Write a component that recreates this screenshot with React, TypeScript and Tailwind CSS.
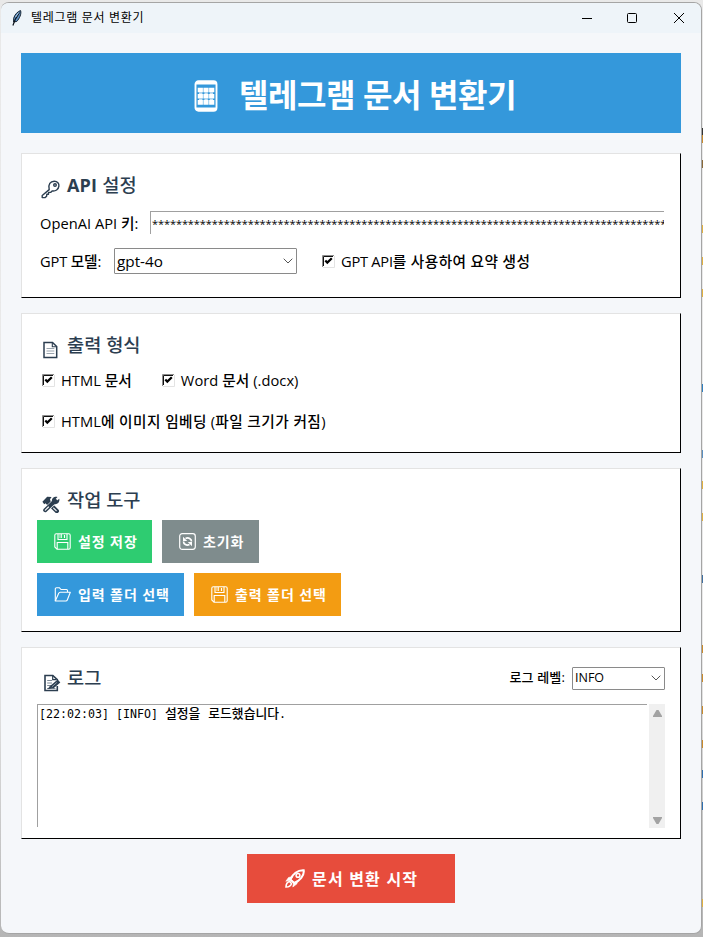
import React, { FunctionComponent, ReactNode } from "react";

interface ChildrenProps {
	children?: ReactNode;
}

interface CardProps extends ChildrenProps {
	twHeight: string;
}

interface CardTitleProps extends ChildrenProps {
	icon: ReactNode;
}

interface CheckProps extends ChildrenProps {
	twText?: string;
}

interface ComboBoxProps {
	value: string;
	twBox: string;
	twText: string;
}

interface ToolButtonProps {
	icon: ReactNode;
	text: string;
	twBox: string;
}

const API_KEY_MASK = "*".repeat(86);

// slivers of the desktop that show beside the window
const desktopMarks = [
	"top-[128px] bg-[#333333]",
	"top-[135px] bg-[#c98a2b]",
	"top-[160px] bg-[#8a6a3a]",
	"top-[225px] bg-[#e0b040]",
	"top-[257px] bg-[#e0b040]",
	"top-[289px] bg-[#e0b040]",
	"top-[384px] bg-[#2f7fc0]",
	"top-[450px] bg-[#5b8fc0]",
	"top-[481px] bg-[#e0b040]",
	"top-[513px] bg-[#e0b040]",
	"top-[575px] bg-[#3f6fa0]",
	"top-[645px] bg-[#c98a2b]",
	"top-[674px] bg-[#c98a2b]",
	"top-[706px] bg-[#c98a2b]",
	"top-[740px] bg-[#c98a2b]",
	"top-[770px] bg-[#2f6fb0]",
	"top-[802px] bg-[#2f6fb0]",
	"top-[899px] bg-[#e0b040]"
];

const FeatherIcon: FunctionComponent = function() {
	return (
		<svg className="w-[10px] h-4" viewBox="0 0 10 16">
			<path d="M8.6.6C6 1.2 2.6 4.600 1.700 8.200L1.600 12 4.800 11.400C7.500 8.500 9.600 4 8.600.6Z" fill="#5b8fc4" stroke="#14202e" strokeWidth="1" />
			<path d="M7.500 2.500 3.200 9.500.9 15.500" fill="none" stroke="#0b1118" strokeWidth="1.200" />
			<path d="M6.800 2.500 3.600 7" fill="none" stroke="#b9d6f0" strokeWidth=".9" />
		</svg>
	);
};

const PhoneIcon: FunctionComponent = function() {
	return (
		<svg className="w-6 h-8" viewBox="0 0 24 32" fill="none">
			<rect x="1.500" y="1.250" width="21" height="29.500" rx="3" stroke="white" strokeWidth="1.900" />
			<path d="M2 3H22M2 29H22" stroke="white" strokeWidth="3" />
			<path d="M3.700 10H20.300M3.700 16.200H20.300M3.700 22.400H20.300" stroke="white" strokeWidth="4.600" strokeDasharray="5.200 .5" />
			<path d="M5 13.100H19M5 19.300H19" stroke="#c3dff3" strokeWidth="1.600" strokeDasharray="3.400 2" />
		</svg>
	);
};

const KeyIcon: FunctionComponent = function() {
	return (
		<svg className="w-[19px] h-[19px]" viewBox="0 0 19 19" fill="none" stroke="#2c3e50" strokeWidth="1.400" strokeLinejoin="round">
			<path d="M8.200 9.600C6.800 4.500 9.500 1.200 13.200 1.200C16.500 1.200 18.200 3.600 17.900 6.200C17.500 9.400 14.500 11.500 11.100 10.900L9.600 12.400H7.600L7.500 14.300H5.800L5.600 16.200 4.200 17.600H1.200V15.500Z" />
			<circle cx="14" cy="5" r="1.300" />
		</svg>
	);
};

const PageIcon: FunctionComponent = function() {
	return (
		<svg className="w-[15px] h-[18px]" viewBox="0 0 15 18" fill="none" stroke="#2c3e50">
			<path d="M1 1.500H9.500L13.700 5.500V16.500H1Z" strokeWidth="1.500" />
			<path d="M9.300 1.500V5.700H13.700" strokeWidth="1.100" />
			<path d="M3.500 7.500H11.300M3.500 10H11.300M3.500 12.500H11.300" stroke="#9aa4ae" strokeWidth="1" />
		</svg>
	);
};

const ToolsIcon: FunctionComponent = function() {
	return (
		<svg className="w-[18px] h-[17px]" viewBox="0 0 18 17" fill="none">
			<path d="M5.500 5.800 14.800 15" stroke="#2c3e50" strokeWidth="4.400" strokeLinecap="round" />
			<path d="M.4 5.700 5.200.7 9.600 1.100 8 3.300 8.900 6.200 5.300 9.200 3.700 7.300 2.200 8.200Z" fill="#2c3e50" />
			<path d="M13.200 4.800 3.400 14.200" stroke="white" strokeWidth="5.200" />
			<path d="M13.200 4.800 3.200 14.200" stroke="#2c3e50" strokeWidth="4" strokeLinecap="round" />
			<path d="M10 5.800C9.400 2.200 12.300.3 15.500 1L13.400 3.300 14.700 4.700 17.300 2.800C18 6.500 15 9 11.800 8Z" fill="#2c3e50" />
			<path d="M11.600 12.100 14.200 14.600M3.300 14.200 6.500 11" stroke="white" strokeWidth="1.100" strokeLinecap="round" />
		</svg>
	);
};

const MemoIcon: FunctionComponent = function() {
	return (
		<svg className="w-[17px] h-[18px]" viewBox="0 0 17 18" fill="none" stroke="#2c3e50">
			<path d="M13.300 12V16.500H1V1.500H8.800L13.300 5.700V6.500" strokeWidth="1.600" />
			<path d="M8.700 1.500V5.700H12" strokeWidth="1.200" />
			<path d="M3.200 6.500H8M3.200 9H8M3.200 11.500H6M3 14.500H11.500" stroke="#7c8996" />
			<path d="M15 7 8 13" strokeWidth="4" />
			<path d="M7.200 11 4.500 14.500 9 13.600Z" fill="#2c3e50" />
			<path d="M12.800 8.500 8 12.700" stroke="#a8b3bd" strokeWidth=".8" />
		</svg>
	);
};

const FloppyIcon: FunctionComponent = function() {
	return (
		<svg className="w-[17px] h-[17px]" viewBox="0 0 17 17" fill="none" stroke="white" strokeWidth="1.100">
			<path d="M.8 2.300Q.8.8 2.300.8H14.700Q16.200.8 16.200 2.300V14.700Q16.200 16.200 14.700 16.200H3L.8 14Z" />
			<path d="M4 1V6.500H13V1M10.500 2V5M3.200 16V9.500H13.800V16" />
			<path d="M6 1V5M7.500 1V5" strokeWidth=".8" />
		</svg>
	);
};

const ReloadIcon: FunctionComponent = function() {
	return (
		<svg className="w-[17px] h-[17px]" viewBox="0 0 17 17" fill="none" stroke="white" strokeWidth="1.200">
			<rect x=".7" y=".7" width="15.600" height="15.600" rx="2.500" />
			<path d="M12.500 8.500C12.500 5.800 9.500 4 6.500 5.500M4.500 8.500C4.500 11.200 7.500 13 10.500 11.500" strokeWidth="1.700" />
			<path d="M4 3.800V8H8.200ZM13 13.200V9H8.800Z" fill="white" stroke="none" />
		</svg>
	);
};

const FolderIcon: FunctionComponent = function() {
	return (
		<svg className="w-[17px] h-[15px]" viewBox="0 0 17 15" fill="none" stroke="white" strokeWidth="1.100" strokeLinejoin="round">
			<path d="M1.300 14V2Q1.300.8 2.500.8H5.500L7 2.500H12.500Q13.500 2.500 13.500 3.500V5" />
			<path d="M1.300 14 4.700 6.300Q5 5.200 6.200 5.200H16.300L13.300 13Q12.900 14 11.800 14Z" />
		</svg>
	);
};

const RocketIcon: FunctionComponent = function() {
	return (
		<svg className="w-[20px] h-[19px]" viewBox="0 0 20 19" fill="none" stroke="white">
			<path d="M5.200 10.500C7.500 5.500 12.500.8 18.700 1.200C19.600 6.500 14.500 12 9.300 14Z" strokeWidth="2" />
			<circle cx="13" cy="6.400" r="1.900" strokeWidth="1.500" />
			<path d="M8 7.500 3.500 8.500.8 12.300 5.500 11.300 8.500 14 7.800 18 12 14.800 12.500 11.500 9.500 13.500 6 10.500Z" fill="white" strokeWidth=".6" />
			<path d="M4.700 12.500C2.500 13 1 15.500 1 18C3.500 18 5.800 17 6.500 14.600Z" strokeWidth="1.600" />
		</svg>
	);
};

const Chevron: FunctionComponent = function() {
	return (
		<svg className="w-[10px] h-[6px] shrink-0" viewBox="0 0 10 6" fill="none">
			<path d="M.7.7 5 5 9.300.7" stroke="#555555" strokeWidth="1" />
		</svg>
	);
};

const Card: FunctionComponent<CardProps> = function({ twHeight, children }: CardProps) {
	return (
		<section className={`flex flex-col bg-white border border-t-[#e3e3e3] border-l-[#e3e3e3] border-r-black border-b-black px-[15px] ${twHeight}`}>
			{children}
		</section>
	);
};

const CardTitle: FunctionComponent<CardTitleProps> = function({ icon, children }: CardTitleProps) {
	return (
		<h2 className="flex items-center h-7 text-[#2c3e50] text-[18.67px] leading-7 font-medium whitespace-pre">
			<span className="flex justify-center w-[19px] ml-1 mr-[7px] pt-[9px]">{icon}</span>
			{children}
		</h2>
	);
};

const Check: FunctionComponent<CheckProps> = function({ twText = "", children }: CheckProps) {
	return (
		<label className="flex items-center h-6">
			<svg className="w-[13px] h-[13px] mr-[6px]" viewBox="0 0 13 13" fill="none">
				<path d="M.5 12V.5H12" stroke="#8c8c8c" />
				<path d="M1.500 11V1.500H11" stroke="#111111" />
				<path d="M1 12.500H12.500V1" stroke="#e3e3e3" />
				<path d="M3.300 5.500 5.300 7.600 9.800 3.200" stroke="black" strokeWidth="2.200" />
			</svg>
			<span className={`whitespace-pre ${twText}`}>{children}</span>
		</label>
	);
};

const ComboBox: FunctionComponent<ComboBoxProps> = function({ value, twBox, twText }: ComboBoxProps) {
	return (
		<div className={`flex items-center justify-between bg-white border border-[#8a8a8a] rounded-[1px] pl-[2px] pr-[3px] ${twBox}`}>
			<span className={twText}>{value}</span>
			<Chevron />
		</div>
	);
};

const ToolButton: FunctionComponent<ToolButtonProps> = function({ icon, text, twBox }: ToolButtonProps) {
	return (
		<button className={`flex items-center h-[43px] pl-[17px] gap-[7px] text-white text-[14px] font-bold whitespace-pre ${twBox}`}>
			{icon}
			<span className="pb-px tracking-[0.9px]">{text}</span>
		</button>
	);
};

const TitleBar: FunctionComponent = function() {
	return (
		<header className="flex items-center h-[30px] shrink-0 pl-[11px] bg-[#eef4f9]">
			<FeatherIcon />
			<span className="ml-[9px] text-[12px] tracking-[0.7px] whitespace-pre">텔레그램 문서 변환기</span>
			<svg className="ml-auto mr-[16px] w-[103px] h-3" viewBox="0 0 103 12" fill="none" stroke="black">
				<path d="M0 6.500H10" />
				<rect x="45.500" y="1.500" width="9" height="9" rx="1" />
				<path d="M92 1 102 11M102 1 92 11" />
			</svg>
		</header>
	);
};

const LogView: FunctionComponent = function() {
	return (
		<div className="flex mt-[12px] h-[124px] gap-[2px]">
			<div className="w-[610px] h-[123px] border-t border-l border-[#a0a0a0] pl-px whitespace-pre font-['DejaVu_Sans_Mono','Noto_Sans_CJK_KR',monospace] text-[11.63px] leading-[17px]">
				{"[22:02:03] [INFO] "}
				<span className="font-medium text-[12.8px]">설정을</span>{" "}
				<span className="font-medium text-[12.8px] ml-px">로드했습니다</span>.
			</div>
			<div className="flex flex-col items-center justify-between w-4 pt-[6px] pb-[4px] bg-[#f0f0f0]">
				<svg className="w-[9px] h-[7px]" viewBox="0 0 9 7"><path d="M3.500 0H5.500L9 6V7H0V6Z" fill="#a3a3a3" /></svg>
				<svg className="w-[9px] h-[7px]" viewBox="0 0 9 7"><path d="M3.500 7H5.500L9 1V0H0V1Z" fill="#a3a3a3" /></svg>
			</div>
		</div>
	);
};

const App: FunctionComponent = function() {
	return (
		<div className="relative w-[703px] h-[937px] overflow-hidden bg-linear-to-b from-[#e9e9e9] from-70% to-[#b5b5b5] pt-[2px] pl-px font-['Open_Sans','Noto_Sans_CJK_KR',sans-serif] text-black">
			{desktopMarks.map((tw) => (
				<i key={tw} className={`absolute right-0 w-px h-2 ${tw}`}></i>
			))}
			<div className="relative flex flex-col w-[701px] h-[932px] rounded-lg overflow-hidden bg-[#f5f7fa] border-t border-r border-b border-[#a5a5a5]">
				<TitleBar />
				<main className="flex flex-col items-center pt-5">
					<div className="flex items-center w-[660px] h-20 bg-[#3498db] pl-[173px] text-white">
						<div className="pt-[5px]"><PhoneIcon /></div>
						<h1 className="ml-[21px] pt-1 text-[32px] leading-none font-bold tracking-[-0.4px] whitespace-pre">텔레그램 문서 변환기</h1>
					</div>
					<div className="flex flex-col w-[660px] gap-[15px] mt-5">
						<Card twHeight="h-[145px] pt-[17px]">
							<CardTitle icon={<KeyIcon />}>
								<span className="text-[18px] font-bold tracking-[0.2px]">API </span>
								<span className="tracking-[0.2px]">설정</span>
							</CardTitle>
							<div className="flex items-center h-[23px] mt-[12px] pl-[3px]">
								<span className="w-[110px] text-[14.67px] tracking-[0.03px] whitespace-pre">
									OpenAI API <span className="font-medium">키</span>:
								</span>
								<div className="w-[514px] h-[23px] overflow-hidden border-t border-l border-[#a0a0a0] pl-px text-[11px] leading-[24px] tracking-[-0.08px]">
									{API_KEY_MASK}
								</div>
							</div>
							<div className="flex items-center h-[26px] mt-[14px] pl-[3px]">
								<span className="w-[74px] text-[14.67px] tracking-[-0.15px] whitespace-pre">
									GPT <span className="font-medium">모델</span>:
								</span>
								<ComboBox value="gpt-4o" twBox="w-[183px] h-[26px]" twText="text-[15.3px] leading-5" />
								<div className="ml-[25px]">
									<Check twText="text-[14.67px] tracking-[-0.25px]">
										GPT API<span className="font-medium tracking-[0.4px]">를 사용하여 요약 생성</span>
									</Check>
								</div>
							</div>
						</Card>
						<Card twHeight="h-[140px] pt-[17px]">
							<CardTitle icon={<PageIcon />}>출력 형식</CardTitle>
							<div className="flex mt-[9px] pl-[5px] gap-[30px]">
								<Check twText="text-[14.67px] tracking-[0.05px]">
									HTML <span className="font-medium">문서</span>
								</Check>
								<Check twText="text-[14.67px] tracking-[0.05px]">
									Word <span className="font-medium">문서</span> (.docx)
								</Check>
							</div>
							<div className="flex mt-[17px] pl-[5px]">
								<Check twText="text-[14.67px] tracking-[0.05px]">
									HTML<span className="font-medium tracking-[0.45px]">에 이미지 임베딩</span> (<span className="font-medium tracking-[0.45px]">파일 크기가 커짐</span>)
								</Check>
							</div>
						</Card>
						<Card twHeight="h-[164px] pt-[17px]">
							<CardTitle icon={<ToolsIcon />}>작업 도구</CardTitle>
							<div className="flex gap-[10px] mt-[6px]">
								<ToolButton icon={<FloppyIcon />} text="설정 저장" twBox="w-[115px] bg-[#2ecc71]" />
								<ToolButton icon={<ReloadIcon />} text="초기화" twBox="w-[97px] bg-[#7f8c8d]" />
							</div>
							<div className="flex gap-[10px] mt-[10px]">
								<ToolButton icon={<FolderIcon />} text="입력 폴더 선택" twBox="w-[147px] bg-[#3498db]" />
								<ToolButton icon={<FloppyIcon />} text="출력 폴더 선택" twBox="w-[147px] bg-[#f39c12]" />
							</div>
						</Card>
						<Card twHeight="h-[192px] pt-[16px]">
							<div className="flex items-center justify-between">
								<CardTitle icon={<div className="pl-[3px] pt-px"><MemoIcon /></div>}>로그</CardTitle>
								<div className="flex items-center gap-[7px]">
									<span className="text-[13px] tracking-[0.15px] font-medium whitespace-pre">로그 레벨:</span>
									<ComboBox value="INFO" twBox="w-[93px] h-[23px]" twText="text-[12.5px] leading-4" />
								</div>
							</div>
							<LogView />
						</Card>
					</div>
					<button className="flex items-center w-[208px] h-[49px] mt-[15px] pl-[38px] gap-[7px] bg-[#e74c3c] text-white text-[16px] font-bold whitespace-pre">
						<RocketIcon />
						<span className="tracking-[1.2px]">문서 변환 시작</span>
					</button>
				</main>
			</div>
		</div>
	);
};

export default App;
